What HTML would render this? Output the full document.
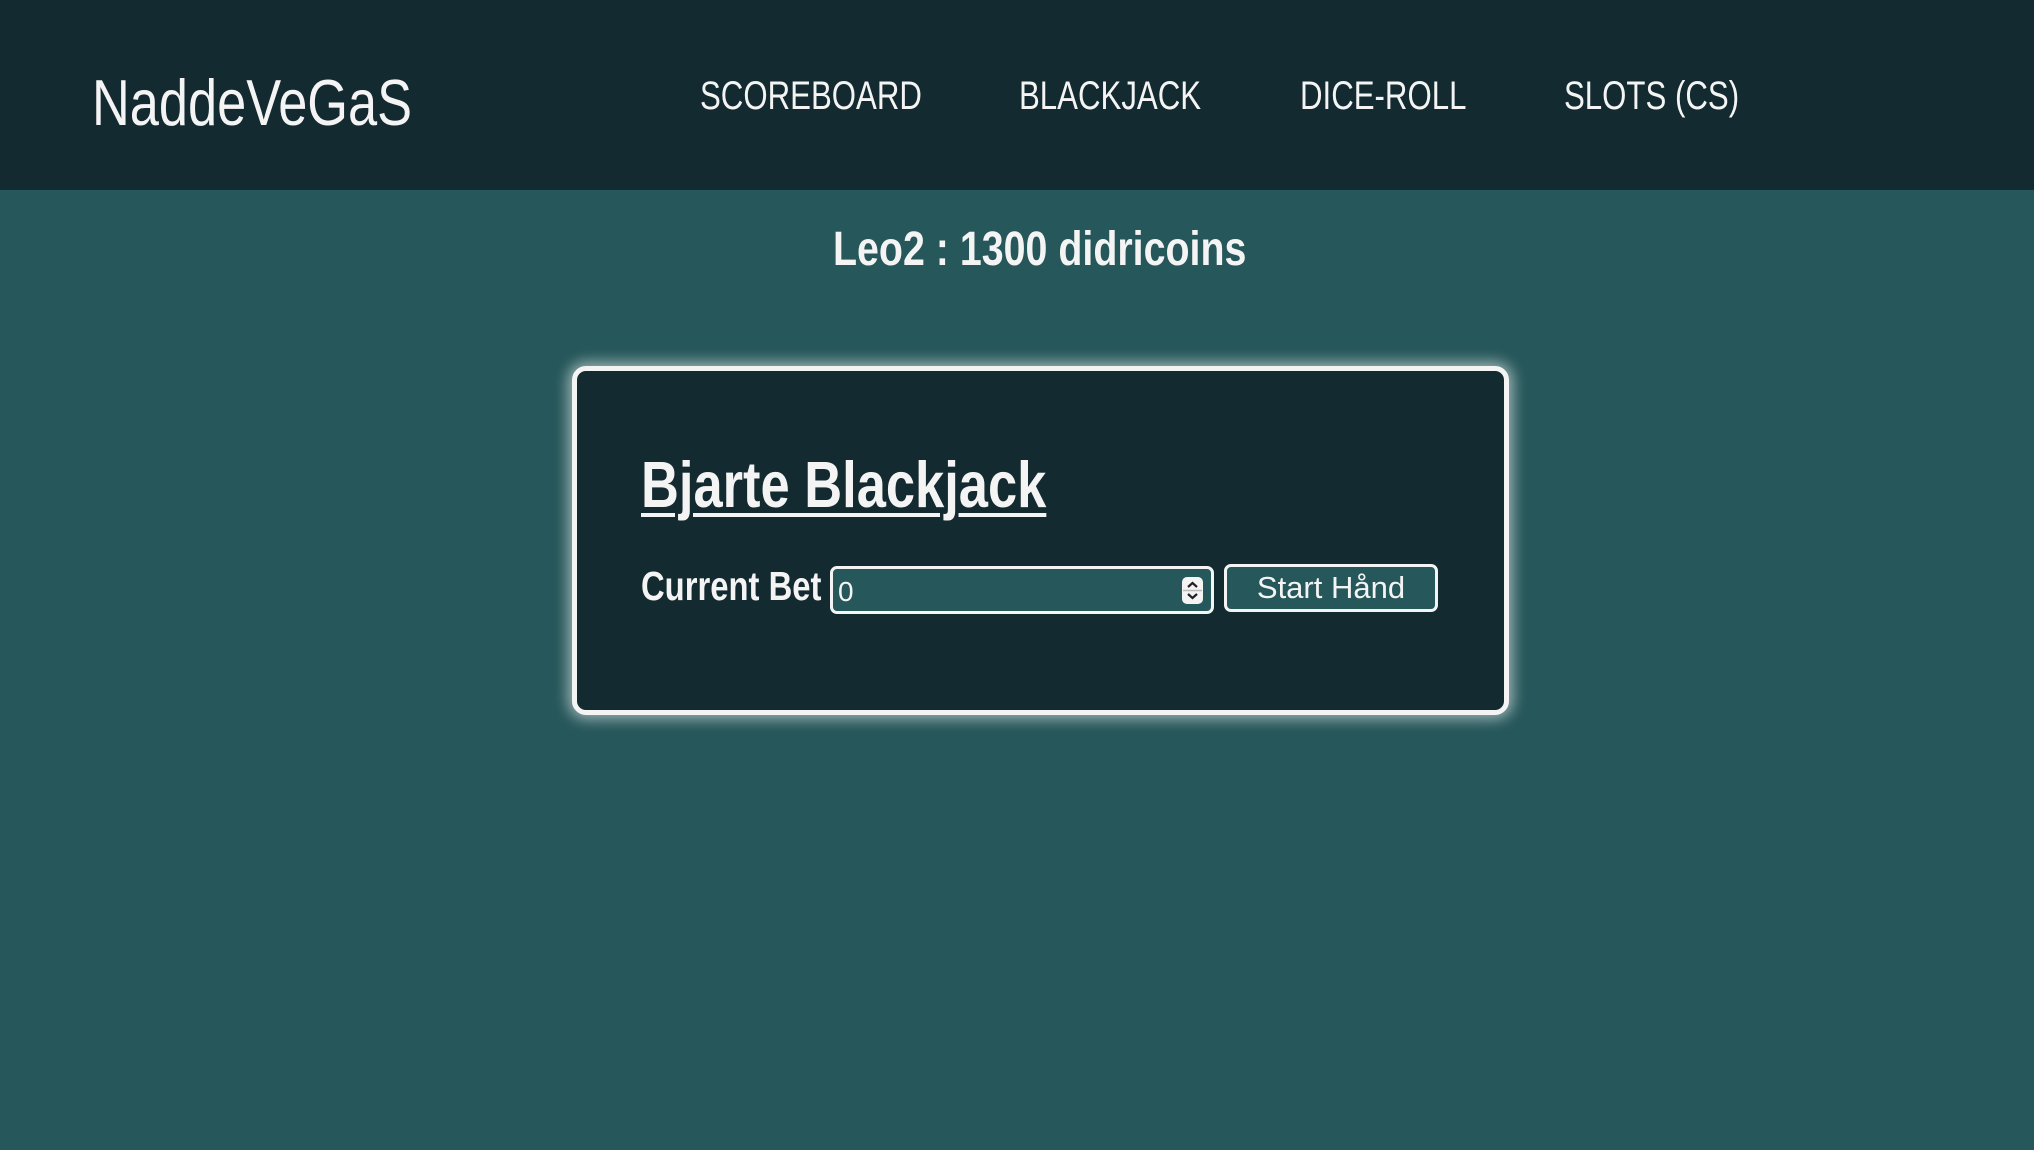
<!DOCTYPE html>
<html><head><meta charset="utf-8"><style>
html,body{margin:0;padding:0;}
body{width:2034px;height:1150px;background:#26575a;position:relative;overflow:hidden;font-family:"Liberation Sans",Arial,sans-serif;color:#f4f4f4;}
.hdr{position:absolute;left:0;top:0;width:2034px;height:190px;background:#132a30;}
.c{position:absolute;white-space:nowrap;transform:scaleX(0.82);transform-origin:0 0;line-height:1;}
.n{transform:scaleX(0.78);}
.card{position:absolute;left:572px;top:366px;width:927px;height:339px;border:5px solid #f4f4f4;border-radius:14px;background:#132a30;box-shadow:0 0 14px 4px rgba(255,255,255,0.55);}
.inp{position:absolute;left:830px;top:566px;width:378px;height:42px;border:3px solid #f4f4f4;border-radius:7px;background:#26575a;}
.spin{position:absolute;left:1182px;top:577px;width:21px;height:27px;background:#f4f4f4;border-radius:5px;}
.btn{position:absolute;left:1224px;top:564px;width:208px;height:42px;border:3px solid #f4f4f4;border-radius:7px;background:#26575a;font-size:31px;text-align:center;line-height:42px;}
</style></head><body>
<div class="hdr"></div>
<div class="c" style="left:92px;top:70px;font-size:65px;transform:scaleX(0.805);">NaddeVeGaS</div>
<div class="c n" style="left:700px;top:76px;font-size:40px;">SCOREBOARD</div>
<div class="c n" style="left:1019px;top:76px;font-size:40px;">BLACKJACK</div>
<div class="c n" style="left:1300px;top:76px;font-size:40px;">DICE-ROLL</div>
<div class="c n" style="left:1564px;top:76px;font-size:40px;">SLOTS (CS)</div>
<div class="c" style="left:833px;top:226px;font-size:48px;font-weight:bold;">Leo2 : 1300 didricoins</div>
<div class="card"></div>
<div class="c" style="left:641px;top:452px;font-size:65px;font-weight:bold;text-decoration:underline;text-decoration-thickness:4px;text-underline-offset:6px;transform:scaleX(0.807);">Bjarte Blackjack</div>
<div class="c" style="left:641px;top:566px;font-size:41px;font-weight:bold;transform:scaleX(0.8);">Current Bet</div>
<div class="inp"></div>
<div style="position:absolute;left:838px;top:576px;font-size:28px;line-height:32px;">0</div>
<div class="spin">
<svg width="21" height="27" viewBox="0 0 21 27"><path d="M6 10 L10.5 6 L15 10" stroke="#222" stroke-width="2.2" fill="none"/><line x1="1" y1="13.5" x2="20" y2="13.5" stroke="#bbb" stroke-width="1.5"/><path d="M6 17 L10.5 21 L15 17" stroke="#222" stroke-width="2.2" fill="none"/></svg>
</div>
<div class="btn">Start Hånd</div>
</body></html>
